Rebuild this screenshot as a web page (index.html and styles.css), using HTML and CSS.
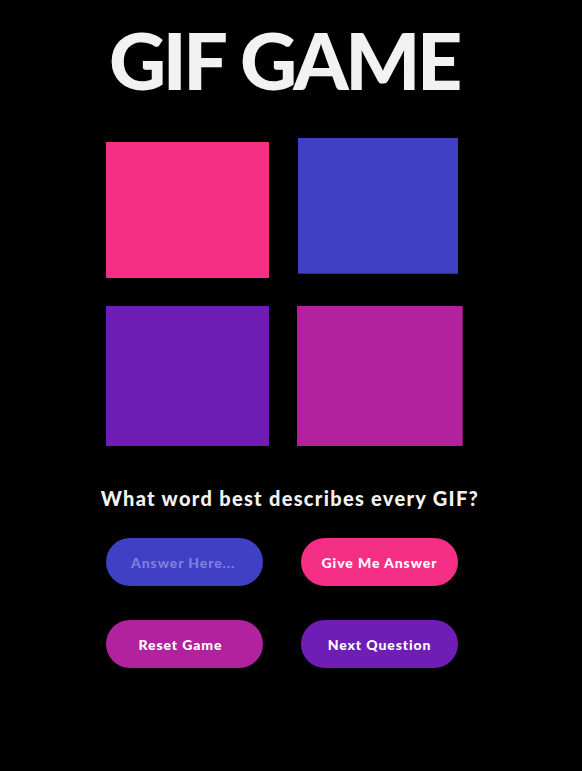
FILE: index.html
```html
<!DOCTYPE html>
<html>
<head>
<meta charset="utf-8">
<title>GIF Game</title>
<link rel="stylesheet" href="styles.css">
</head>
<body>
<main class="game">
  <h1 class="title">GIF GAME</h1>
  <section class="board">
    <div class="row row-top">
      <div class="gif gif-pink"></div>
      <div class="gif gif-blue"></div>
    </div>
    <div class="row row-bottom">
      <div class="gif gif-purple"></div>
      <div class="gif gif-magenta"></div>
    </div>
  </section>
  <p class="question">What word best describes every GIF?</p>
  <div class="controls">
    <input class="pill pill-input" type="text" placeholder="Answer Here...">
    <button class="pill pill-pink">Give Me Answer</button>
    <button class="pill pill-magenta pill-reset">Reset Game</button>
    <button class="pill pill-purple">Next Question</button>
  </div>
</main>
</body>
</html>
```

FILE: styles.css
```css
html, body {
  margin: 0;
  padding: 0;
  background: #000;
}
body {
  font-family: Lato, "Open Sans", sans-serif;
  color: #f2f2f2;
}
.game {
  width: 582px;
  padding-top: 22px;
}
.title {
  margin: 0;
  text-align: center;
  font-family: Lato, sans-serif;
  font-weight: 900;
  font-size: 79px;
  line-height: 76px;
  letter-spacing: -3.4px;
  word-spacing: 2px;
  color: #f2f2f2;
  padding-right: 14px;
}
.board {
  margin-top: 40px;
  padding-left: 106px;
  display: flex;
  flex-direction: column;
  gap: 28px;
}
.row {
  display: flex;
  align-items: flex-start;
}
.row-top { gap: 29px; }
.row-bottom { gap: 28px; }
.gif { flex: none; }
.gif-pink {
  width: 163px;
  height: 136px;
  margin-top: 4px;
  background: #f52f86;
}
.gif-blue {
  width: 160px;
  height: 135px;
  background: #4040c5;
  border-bottom: 1px solid #2a2a98;
}
.gif-purple {
  width: 163px;
  height: 140px;
  background: #701db5;
}
.gif-magenta {
  width: 165px;
  height: 140px;
  background: #b3229e;
  border-right: 1px solid #7d1470;
}
.question {
  margin: 38px 0 0;
  text-align: center;
  font-weight: 900;
  font-size: 20px;
  line-height: 28px;
  letter-spacing: 1.3px;
  padding-right: 2px;
  color: #f2f2f2;
}
.controls {
  margin-top: 26px;
  padding-left: 106px;
  display: grid;
  grid-template-columns: 157px 157px;
  column-gap: 38px;
  row-gap: 34px;
}
.pill {
  box-sizing: border-box;
  width: 157px;
  height: 48px;
  border: none;
  border-radius: 24px;
  font-family: Lato, sans-serif;
  font-weight: 900;
  font-size: 14px;
  letter-spacing: 0.9px;
  color: #ffffff;
  padding: 0;
  text-align: center;
  outline: none;
}
.pill-input {
  background: #4040c5;
  padding-left: 25px;
  text-align: left;
}
.pill-input::placeholder {
  color: #7f7fdb;
  opacity: 1;
}
.pill-pink { background: #f52f86; }
.pill-magenta { background: #b3229e; }
.pill-purple { background: #701db5; }
.pill-reset { padding-right: 8px; }
```
